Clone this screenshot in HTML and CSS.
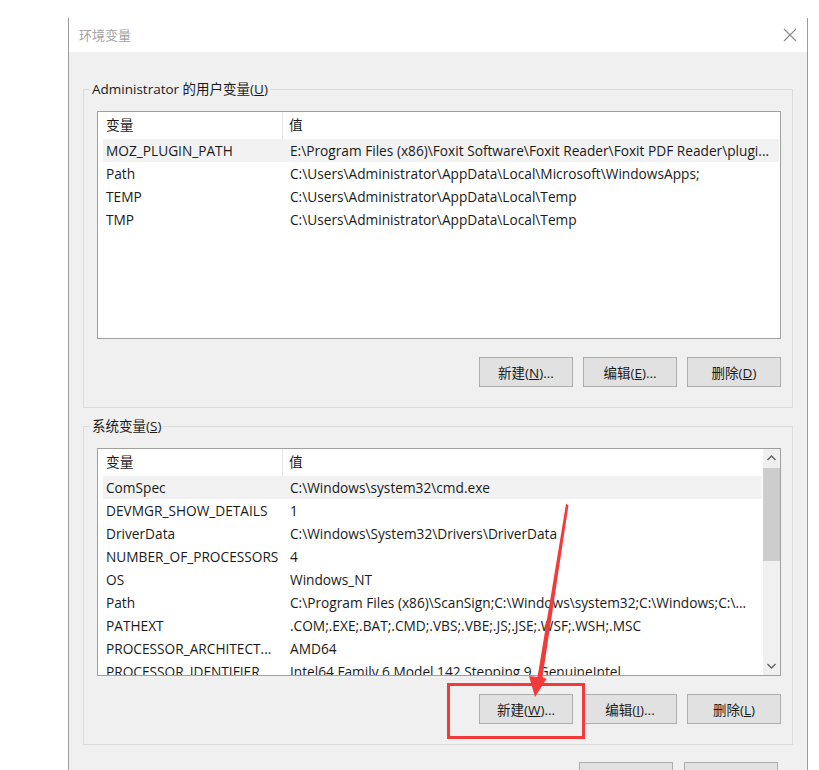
FILE: index.html
```html
<!DOCTYPE html>
<html lang="zh-CN">
<head>
    <meta charset="UTF-8">
    <title>环境变量</title>
    <link rel="stylesheet" href="styles.css">
</head>
<body>
<div class="screen">
    <div class="dialog">
        <div class="titlebar">
            <span class="title">环境变量</span>
            <svg class="close" width="14" height="14" viewBox="0 0 14 14">
                <path d="M1 1 L13 13 M13 1 L1 13" stroke="#8a8a8a" stroke-width="1.1" fill="none"/>
            </svg>
        </div>

        <div class="client">
            <fieldset class="group">
                <legend>Administrator 的用户变量(<u>U</u>)</legend>
                <div class="list">
                    <div class="rows">
                        <div class="row head">
                            <div class="c1">变量</div>
                            <div class="c2">值</div>
                        </div>
                        <div class="row sel">
                            <div class="c1">MOZ_PLUGIN_PATH</div>
                            <div class="c2">E:\Program Files (x86)\Foxit Software\Foxit Reader\Foxit PDF Reader\plugi...</div>
                        </div>
                        <div class="row">
                            <div class="c1">Path</div>
                            <div class="c2">C:\Users\Administrator\AppData\Local\Microsoft\WindowsApps;</div>
                        </div>
                        <div class="row">
                            <div class="c1">TEMP</div>
                            <div class="c2">C:\Users\Administrator\AppData\Local\Temp</div>
                        </div>
                        <div class="row">
                            <div class="c1">TMP</div>
                            <div class="c2">C:\Users\Administrator\AppData\Local\Temp</div>
                        </div>
                    </div>
                </div>
                <div class="buttons">
                    <button>新建(<u>N</u>)...</button>
                    <button>编辑(<u>E</u>)...</button>
                    <button>删除(<u>D</u>)</button>
                </div>
            </fieldset>

            <fieldset class="group second">
                <legend>系统变量(<u>S</u>)</legend>
                <div class="list">
                    <div class="rows">
                        <div class="row head">
                            <div class="c1">变量</div>
                            <div class="c2">值</div>
                        </div>
                        <div class="row sel">
                            <div class="c1">ComSpec</div>
                            <div class="c2">C:\Windows\system32\cmd.exe</div>
                        </div>
                        <div class="row">
                            <div class="c1">DEVMGR_SHOW_DETAILS</div>
                            <div class="c2">1</div>
                        </div>
                        <div class="row">
                            <div class="c1">DriverData</div>
                            <div class="c2">C:\Windows\System32\Drivers\DriverData</div>
                        </div>
                        <div class="row">
                            <div class="c1">NUMBER_OF_PROCESSORS</div>
                            <div class="c2">4</div>
                        </div>
                        <div class="row">
                            <div class="c1">OS</div>
                            <div class="c2">Windows_NT</div>
                        </div>
                        <div class="row">
                            <div class="c1">Path</div>
                            <div class="c2">C:\Program Files (x86)\ScanSign;C:\Windows\system32;C:\Windows;C:\...</div>
                        </div>
                        <div class="row">
                            <div class="c1">PATHEXT</div>
                            <div class="c2">.COM;.EXE;.BAT;.CMD;.VBS;.VBE;.JS;.JSE;.WSF;.WSH;.MSC</div>
                        </div>
                        <div class="row">
                            <div class="c1">PROCESSOR_ARCHITECT...</div>
                            <div class="c2">AMD64</div>
                        </div>
                        <div class="row">
                            <div class="c1">PROCESSOR_IDENTIFIER</div>
                            <div class="c2">Intel64 Family 6 Model 142 Stepping 9, GenuineIntel</div>
                        </div>
                    </div>
                    <div class="scrollbar">
                        <svg class="arrow" width="17" height="19" viewBox="0 0 17 19">
                            <path d="M4.5 11 L8.5 7 L12.5 11" stroke="#606060" stroke-width="1.4" fill="none"/>
                        </svg>
                        <div class="thumb"></div>
                        <div class="track"></div>
                        <svg class="arrow" width="17" height="19" viewBox="0 0 17 19">
                            <path d="M4.5 8 L8.5 12 L12.5 8" stroke="#606060" stroke-width="1.4" fill="none"/>
                        </svg>
                    </div>
                </div>
                <div class="buttons">
                    <button>新建(<u>W</u>)...</button>
                    <button>编辑(<u>I</u>)...</button>
                    <button>删除(<u>L</u>)</button>
                </div>
            </fieldset>

            <div class="footer">
                <button>确定</button>
                <button>取消</button>
            </div>
        </div>
    </div>

    <!-- annotation drawn over the screenshot -->
    <div class="mark-box"></div>
    <svg class="mark-arrow" width="819" height="770" viewBox="0 0 819 770">
        <polygon fill="#f23a3a" points="566,504 568.5,505 542.5,677 546.5,679 535,697 529,676 537.5,677"/>
    </svg>
</div>
</body>
</html>
```

FILE: styles.css
```css
body {
    margin: 0;
    background: #fff;
    font-family: "Open Sans", "Noto Sans CJK SC", sans-serif;
    font-size: 13px;
    color: #1a1a1a;
}
.screen {
    position: relative;
    width: 819px;
    height: 770px;
    overflow: hidden;
}
.dialog {
    margin: 18px 0 0 68px;
    width: 740px;
    height: 760px;
    box-sizing: border-box;
    border-left: 1px solid #9c9c9c;
    border-right: 1px solid #9c9c9c;
    background: #f0f0f0;
}
.titlebar {
    height: 34px;
    background: #fff;
    display: flex;
    align-items: center;
    justify-content: space-between;
    padding: 0 10px;
}
.title {
    color: #a3a3a3;
    font-size: 13px;
    margin-top: -2px;
}
.client {
    padding: 29px 14px 0;
}
.group {
    margin: 0;
    padding: 14px 11px 20px 13px;
    border: 1px solid #dcdcdc;
    min-width: 0;
}
.group.second {
    margin-top: 10px;
}
legend {
    margin-left: -7px;
    padding: 0 2px;
    line-height: 16px;
    font-size: 13.5px;
}
.list {
    height: 228px;
    box-sizing: border-box;
    border: 1px solid #a0a0a0;
    background: #fff;
    display: flex;
    overflow: hidden;
}
.rows {
    flex: 1;
    min-width: 0;
    padding-left: 5px;
    padding-right: 1px;
}
.row {
    display: flex;
    height: 23px;
    line-height: 23px;
    white-space: nowrap;
    font-size: 13.7px;
}
.row.head {
    height: 27px;
    line-height: 25px;
}
.row.sel {
    background: #f2f2f2;
}
.c1 {
    width: 180px;
    flex: none;
    box-sizing: border-box;
    padding-left: 3px;
    overflow: hidden;
}
.c2 {
    flex: 1;
    padding-left: 7px;
    overflow: hidden;
}
.head .c1 {
    border-right: 1px solid #e5e5e5;
}
.head .c2 {
    padding-left: 6px;
}
.scrollbar {
    width: 17px;
    flex: none;
    background: #f0f0f0;
    display: flex;
    flex-direction: column;
}
.arrow {
    display: block;
    flex: none;
}
.thumb {
    height: 93px;
    background: #cdcdcd;
    flex: none;
}
.track {
    flex: 1;
}
.buttons {
    display: flex;
    justify-content: flex-end;
    gap: 10px;
    margin-top: 18px;
}
button {
    width: 94px;
    height: 30px;
    padding: 0;
    border: 1px solid #adadad;
    background: #e1e1e1;
    font-family: "Open Sans", "Noto Sans CJK SC", sans-serif;
    font-size: 13.5px;
    color: #1a1a1a;
}
.footer {
    display: flex;
    justify-content: flex-end;
    gap: 11px;
    margin-top: 17px;
    padding-right: 15px;
}
.mark-box {
    position: absolute;
    left: 447px;
    top: 683px;
    width: 132px;
    height: 50px;
    border: 3px solid #f23a3a;
}
.mark-arrow {
    position: absolute;
    left: 0;
    top: 0;
    pointer-events: none;
}
```
